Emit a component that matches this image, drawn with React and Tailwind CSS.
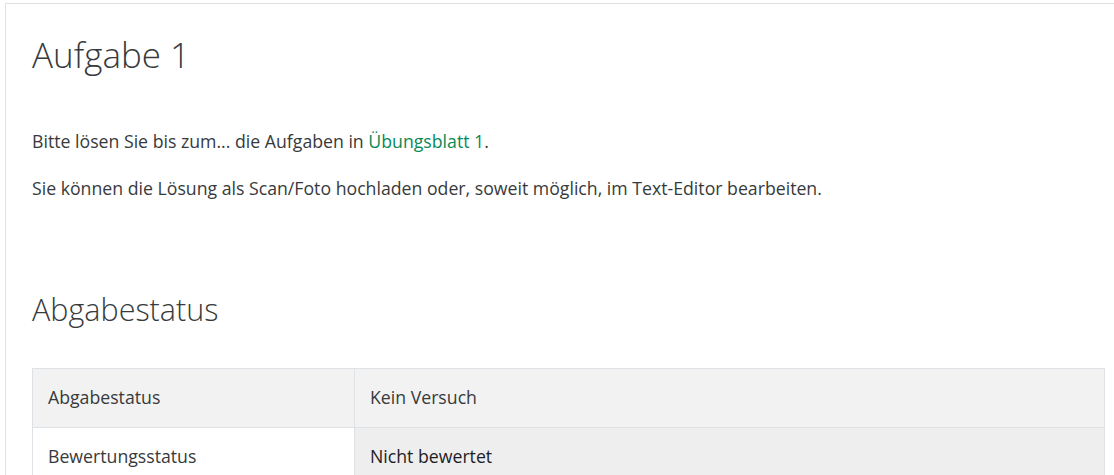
import React from 'react';

const rows = [
  { label: 'Abgabestatus', value: 'Kein Versuch', rowBg: 'bg-[#f2f2f2]', valueBg: 'bg-[#f2f2f2]', valueColor: 'text-[#373a3c]' },
  { label: 'Bewertungsstatus', value: 'Nicht bewertet', rowBg: 'bg-white', valueBg: 'bg-[#eeeeee]', valueColor: 'text-[#1d2125]' },
];

export default function App() {
  return (
    <div className="pl-[5px] pt-[3px] bg-white min-h-[475px] font-['Open_Sans',sans-serif] text-[#373a3c] overflow-hidden">
      <div className="border-t border-l border-[#dee2e6] w-[1200px] pl-[26px] pr-[10px] pt-[30px]">
        {/* Heading */}
        <h2 className="text-[35px] font-light leading-[1.2] text-[#373a3c]">Aufgabe 1</h2>

        {/* Intro text */}
        <div className="mt-[52px] text-[17.7px] leading-[1.5]">
          <p>
            Bitte lösen Sie bis zum... die Aufgaben in{' '}
            <a href="#" className="text-[#0a8a56]">Übungsblatt 1</a>.
          </p>
          <p className="mt-[20px]">
            Sie können die Lösung als Scan/Foto hochladen oder, soweit möglich, im Text-Editor bearbeiten.
          </p>
        </div>

        {/* Submission status */}
        <h2 className="mt-[90px] text-[30.5px] font-light leading-[1.2]">Abgabestatus</h2>

        <table className="mt-[40px] w-[1073px] border-collapse text-[17.7px]">
          <tbody>
            {rows.map((r) => (
              <tr key={r.label} className={r.rowBg}>
                <td className="w-[322px] h-[59px] px-[15px] border border-[#dee2e6] align-middle">{r.label}</td>
                <td className={`px-[15px] h-[59px] border border-[#dee2e6] align-middle ${r.valueBg} ${r.valueColor}`}>{r.value}</td>
              </tr>
            ))}
          </tbody>
        </table>
      </div>
    </div>
  );
}
